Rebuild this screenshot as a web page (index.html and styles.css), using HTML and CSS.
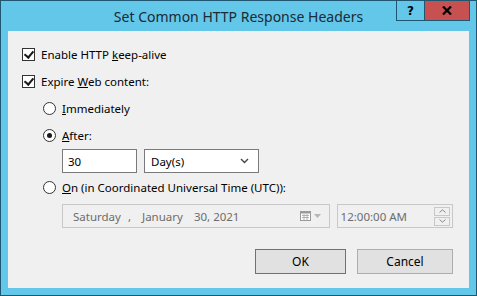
FILE: index.html
```html
<!DOCTYPE html>
<html lang="en">
<head>
    <meta charset="UTF-8">
    <title>Set Common HTTP Response Headers</title>
    <link rel="stylesheet" href="styles.css">
</head>
<body>
    <div class="window">
        <header class="titlebar">
            <span></span>
            <h1 class="title">Set Common HTTP Response Headers</h1>
            <div class="caption">
                <button class="cap-btn help">?</button>
                <button class="cap-btn close">
                    <svg width="10" height="9" viewBox="0 0 10 9"><path d="M1 0.5 L9 8.5 M9 0.5 L1 8.5" stroke="#000" stroke-width="2.2" fill="none"/></svg>
                </button>
            </div>
        </header>
        <main class="client">
            <label class="option first"><span class="check on"></span><span>Enable HTTP <u>k</u>eep-alive</span></label>
            <label class="option"><span class="check on"></span><span>Expire <u>W</u>eb content:</span></label>
            <div class="sub">
                <label class="option"><span class="radio"></span><span><u>I</u>mmediately</span></label>
                <label class="option"><span class="radio on"></span><span><u>A</u>fter:</span></label>
                <div class="fields after">
                    <div class="textbox">30</div>
                    <div class="combo">
                        <span>Day(s)</span>
                        <svg width="9" height="6" viewBox="0 0 9 6"><path d="M1 1 L4.5 4.5 L8 1" stroke="#444" stroke-width="1.4" fill="none"/></svg>
                    </div>
                </div>
                <label class="option on-row"><span class="radio"></span><span><u>O</u>n (in Coordinated Universal Time (UTC)):</span></label>
                <div class="fields on">
                    <div class="datebox">
                        <span class="date-text">
                            <span>Saturday</span>
                            <span class="comma">,</span>
                            <span>January</span>
                            <span>30, 2021</span>
                        </span>
                        <span class="date-icons">
                            <svg width="11" height="10" viewBox="0 0 11 10"><rect x="0.5" y="0.5" width="10" height="9" fill="#fff" stroke="#9a9a9a"/><rect x="0.5" y="0.5" width="10" height="2" fill="#9a9a9a"/><path d="M2 4.5 H9 M2 6.5 H9 M4 3 V9 M7 3 V9" stroke="#b0b0b0"/></svg>
                            <svg width="7" height="4" viewBox="0 0 7 4"><path d="M0 0 H7 L3.5 4 Z" fill="#b5b5b5"/></svg>
                        </span>
                    </div>
                    <div class="timebox">
                        <span class="time-text">12:00:00 AM</span>
                        <span class="spin">
                            <span class="spin-btn"><svg width="7" height="4" viewBox="0 0 7 4"><path d="M0.5 3.5 L3.5 0.8 L6.5 3.5" stroke="#888" fill="none"/></svg></span>
                            <span class="spin-btn"><svg width="7" height="4" viewBox="0 0 7 4"><path d="M0.5 0.5 L3.5 3.2 L6.5 0.5" stroke="#888" fill="none"/></svg></span>
                        </span>
                    </div>
                </div>
            </div>
            <div class="actions">
                <button class="btn default">OK</button>
                <button class="btn cancel">Cancel</button>
            </div>
        </main>
    </div>
</body>
</html>
```

FILE: styles.css
```css
:root {
    --frame: #62c7e9;
    --frame-edge: #1f5672;
    --face: #f0f0f0;
    --text: #000000;
    --disabled: #6d6d6d;
}

* {
    box-sizing: border-box;
}
body {
    margin: 0;
    font-family: 'Noto Sans', sans-serif;
    font-size: 11.5px;
    color: var(--text);
}
.window {
    width: 477px;
    height: 296px;
    display: flex;
    flex-direction: column;
    background-color: var(--frame);
    border: 1px solid var(--frame-edge);
    padding: 0 7px 7px 7px;
}
.titlebar {
    height: 30px;
    display: grid;
    grid-template-columns: 1fr auto 1fr;
    align-items: start;
}
.title {
    margin: 6px 0 0 0;
    font-size: 14px;
    line-height: 19px;
    font-weight: normal;
    color: #1b2a33;
    white-space: nowrap;
}
.caption {
    display: flex;
    justify-content: flex-end;
    margin: -1px -1px 0 0;
}
.cap-btn {
    height: 21px;
    border: 1px solid var(--frame-edge);
    padding: 0;
    display: flex;
    justify-content: center;
    align-items: center;
    font-family: 'DejaVu Sans', sans-serif;
    font-weight: bold;
    font-size: 12px;
    color: #000;
}
.help {
    width: 28px;
    background-color: var(--frame);
    border-right: none;
}
.close {
    width: 46px;
    background-color: #c75050;
}
.client {
    flex: 1;
    background-color: var(--face);
    padding: 14px 16px 0 14px;
    display: flex;
    flex-direction: column;
}
.option {
    height: 18px;
    display: flex;
    align-items: center;
    gap: 6px;
    margin-top: 9px;
    white-space: nowrap;
}
.option.first {
    margin-top: 0;
}
.check {
    width: 13px;
    height: 13px;
    border: 1px solid #333333;
    background-color: #ffffff;
    position: relative;
}
.check.on::after {
    content: "";
    position: absolute;
    left: 3px;
    top: 0px;
    width: 4px;
    height: 7px;
    border: solid #1a1a1a;
    border-width: 0 2.5px 2.5px 0;
    transform: rotate(40deg);
}
.sub {
    padding-left: 21px;
    display: flex;
    flex-direction: column;
}
.radio {
    width: 13px;
    height: 13px;
    border: 1px solid #333333;
    border-radius: 50%;
    background-color: #ffffff;
    display: flex;
    justify-content: center;
    align-items: center;
}
.radio.on::after {
    content: "";
    width: 5px;
    height: 5px;
    border-radius: 50%;
    background-color: #1a1a1a;
}
.fields {
    display: flex;
    gap: 7px;
    padding-left: 19px;
    height: 24px;
}
.fields.after {
    margin-top: 5px;
}
.fields.on {
    margin-top: 8px;
}
.on-row {
    margin-top: 5px;
}
.textbox {
    width: 75px;
    border: 1px solid #7a7a7a;
    background-color: #ffffff;
    padding: 0 5px;
    display: flex;
    align-items: center;
}
.combo {
    width: 115px;
    border: 1px solid #7a7a7a;
    background-color: #ffffff;
    padding: 0 9px 0 6px;
    display: flex;
    align-items: center;
    justify-content: space-between;
}
.datebox {
    width: 269px;
    border: 1px solid #c8c8c8;
    background-color: var(--face);
    color: var(--disabled);
    padding: 0 8px 0 10px;
    display: flex;
    align-items: center;
    justify-content: space-between;
}
.date-text {
    display: flex;
    gap: 11px;
}
.comma {
    margin-left: -4px;
}
.date-icons {
    display: flex;
    align-items: center;
    gap: 3px;
}
.timebox {
    width: 117px;
    border: 1px solid #c8c8c8;
    background-color: var(--face);
    color: var(--disabled);
    padding: 0 2px 0 3px;
    display: flex;
    align-items: center;
    justify-content: space-between;
}
.spin {
    display: flex;
    flex-direction: column;
    gap: 1px;
}
.spin-btn {
    width: 16px;
    height: 9px;
    border: 1px solid #c8c8c8;
    display: flex;
    justify-content: center;
    align-items: center;
}
.actions {
    margin-top: 21px;
    display: flex;
    justify-content: flex-end;
    gap: 11px;
}
.btn {
    height: 25px;
    font-family: 'Noto Sans', sans-serif;
    font-size: 12px;
    background-color: #e1e1e1;
    border: 1px solid #adadad;
    color: #000;
    padding: 0;
}
.btn.default {
    width: 91px;
    border-color: #3c7fb1;
}
.btn.cancel {
    width: 96px;
}
```
